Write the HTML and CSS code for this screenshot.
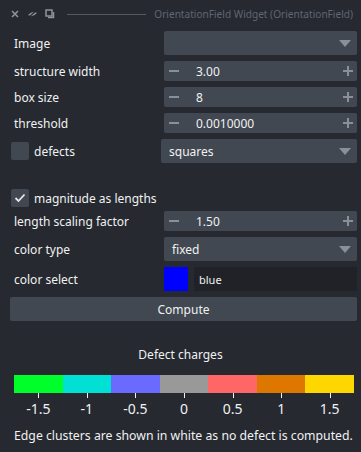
FILE: index.html
```html
<!DOCTYPE html>
<html lang="en">
<head>
  <meta charset="UTF-8" />
  <title>OrientationField Widget</title>
  <link rel="stylesheet" href="styles.css">
</head>
<body>

  <div class="titlebar">
    <div class="title-icons">
      <svg width="10" height="10" viewBox="0 0 10 10"><path d="M2 2 L8 8 M8 2 L2 8" stroke="#8e9299" stroke-width="1.6"/></svg>
      <svg width="11" height="10" viewBox="0 0 11 10"><path d="M1 6 Q5.5 1 10 4 Q5.5 9 1 6 Z" fill="#8e9299"/><path d="M2 8 L9 2" stroke="#262930" stroke-width="1.2"/></svg>
      <svg width="10" height="10" viewBox="0 0 10 10"><rect x="1" y="1" width="6" height="6" fill="none" stroke="#8e9299" stroke-width="1.5"/><path d="M3 8.5 H8.5 V3" fill="none" stroke="#8e9299" stroke-width="1.5"/></svg>
    </div>
    <div class="title-line"></div>
    <div class="title-text">OrientationField Widget (OrientationField)</div>
  </div>

  <div class="form">
    <div class="row row-combo">
      <label class="lbl">Image</label>
      <div class="combo"><span></span><i class="arrow"></i></div>
    </div>
    <div class="row">
      <label class="lbl">structure width</label>
      <div class="spin"><span class="minus"></span><span class="val">3.00</span><span class="plus"></span></div>
    </div>
    <div class="row">
      <label class="lbl">box size</label>
      <div class="spin"><span class="minus"></span><span class="val">8</span><span class="plus"></span></div>
    </div>
    <div class="row">
      <label class="lbl">threshold</label>
      <div class="spin"><span class="minus"></span><span class="val">0.0010000</span><span class="plus"></span></div>
    </div>
    <div class="row row-combo">
      <label class="lbl check-lbl"><span class="box"></span>defects</label>
      <div class="combo"><span>squares</span><i class="arrow"></i></div>
    </div>

    <div class="row row-check">
      <label class="lbl check-lbl wide"><span class="box checked">
        <svg width="12" height="10" viewBox="0 0 12 10"><path d="M1.5 5 L4.5 8 L10.5 1.5" fill="none" stroke="#e6e7e9" stroke-width="1.8"/></svg>
      </span>magnitude as lengths</label>
    </div>
    <div class="row">
      <label class="lbl">length scaling factor</label>
      <div class="spin"><span class="minus"></span><span class="val">1.50</span><span class="plus"></span></div>
    </div>
    <div class="row row-combo">
      <label class="lbl">color type</label>
      <div class="combo"><span>fixed</span><i class="arrow"></i></div>
    </div>
    <div class="row row-combo">
      <label class="lbl">color select</label>
      <div class="color-pick">
        <div class="swatch"></div>
        <div class="color-name">blue</div>
      </div>
    </div>
    <button class="compute">Compute</button>
  </div>

  <div class="legend">
    <div class="legend-title">Defect charges</div>
    <div class="bar">
      <div style="background:#00ff2a"></div>
      <div style="background:#00e0d5"></div>
      <div style="background:#6a6aff"></div>
      <div style="background:#999999"></div>
      <div style="background:#ff6666"></div>
      <div style="background:#dd7700"></div>
      <div style="background:#ffd700"></div>
    </div>
    <div class="ticks">
      <span>-1.5</span><span>-1</span><span>-0.5</span><span>0</span><span>0.5</span><span>1</span><span>1.5</span>
    </div>
    <p class="note">Edge clusters are shown in white as no defect is computed.</p>
  </div>

</body>
</html>
```

FILE: styles.css
```css
body {
  margin: 0;
  background-color: #262930;
  color: #f0f1f2;
  font-family: "Noto Sans", "DejaVu Sans", sans-serif;
  font-size: 12px;
}

.titlebar {
  display: flex;
  align-items: center;
  height: 28px;
  padding: 0 8px 0 10px;
}

.title-icons {
  display: flex;
  align-items: center;
  gap: 7px;
}

.title-line {
  flex: 1;
  height: 1px;
  background-color: #555a62;
  margin: 0 8px 0 12px;
}

.title-text {
  color: #5f6772;
  font-size: 10.1px;
  white-space: nowrap;
}

.form {
  padding: 3px 4px 0 10px;
}

.row {
  display: flex;
  align-items: center;
  height: 20px;
  margin-bottom: 6px;
}

.row-combo {
  height: 24px;
}

.row-check {
  height: 18px;
  margin-top: 26px;
  margin-bottom: 4px;
}

.lbl {
  width: 150px;
  flex: none;
  padding-left: 4px;
  white-space: nowrap;
}

.lbl.wide {
  width: auto;
}

.check-lbl {
  display: flex;
  align-items: center;
  padding-left: 1px;
}

.box {
  width: 18px;
  height: 18px;
  border-radius: 2px;
  background-color: #414851;
  margin-right: 5px;
  display: flex;
  align-items: center;
  justify-content: center;
}

.combo, .spin, .color-pick {
  flex: 1;
  height: 100%;
  border-radius: 2px;
  background-color: #414851;
  display: flex;
  align-items: center;
  position: relative;
}

.combo span {
  padding-left: 8px;
}

.arrow {
  position: absolute;
  right: 6px;
  top: 9px;
  width: 0;
  height: 0;
  border-left: 6px solid transparent;
  border-right: 6px solid transparent;
  border-top: 7px solid #8b8f97;
}

.minus, .plus {
  position: relative;
  width: 10px;
  height: 10px;
  flex: none;
}

.minus {
  margin-left: 5px;
}

.plus {
  margin-left: auto;
  margin-right: 4px;
}

.minus::before, .plus::before, .plus::after {
  content: "";
  position: absolute;
  background-color: #8b8f97;
  left: 0;
  top: 4px;
  width: 10px;
  height: 2px;
}

.plus::after {
  left: 4px;
  top: 0;
  width: 2px;
  height: 10px;
}

.val {
  margin-left: 17px;
}

.color-pick {
  background: none;
  gap: 6px;
}

.swatch {
  width: 24px;
  height: 24px;
  background-color: #0000ff;
}

.color-name {
  flex: 1;
  height: 100%;
  background-color: #202227;
  font-size: 11px;
  display: flex;
  align-items: center;
  padding-left: 5px;
}

.compute {
  display: block;
  width: 100%;
  height: 24px;
  margin-top: 0;
  border: none;
  border-radius: 2px;
  background-color: #414851;
  color: #f0f1f2;
  font-family: inherit;
  font-size: 12px;
}

.legend {
  padding: 0 7px 0 14px;
}

.legend-title {
  text-align: center;
  margin-top: 25px;
  margin-right: 7px;
  height: 20px;
}

.bar {
  display: grid;
  grid-template-columns: repeat(7, 1fr);
  height: 18px;
  margin-top: 9px;
}

.ticks {
  display: grid;
  grid-template-columns: repeat(7, 1fr);
  font-size: 14px;
  text-align: center;
}

.ticks span {
  position: relative;
  padding-top: 6px;
}

.ticks span::before {
  content: "";
  position: absolute;
  left: 50%;
  top: 0;
  width: 1px;
  height: 5px;
  background-color: #f0f1f2;
}

.note {
  margin: 9px 0 0 0;
  font-size: 12.25px;
  white-space: nowrap;
}
```
